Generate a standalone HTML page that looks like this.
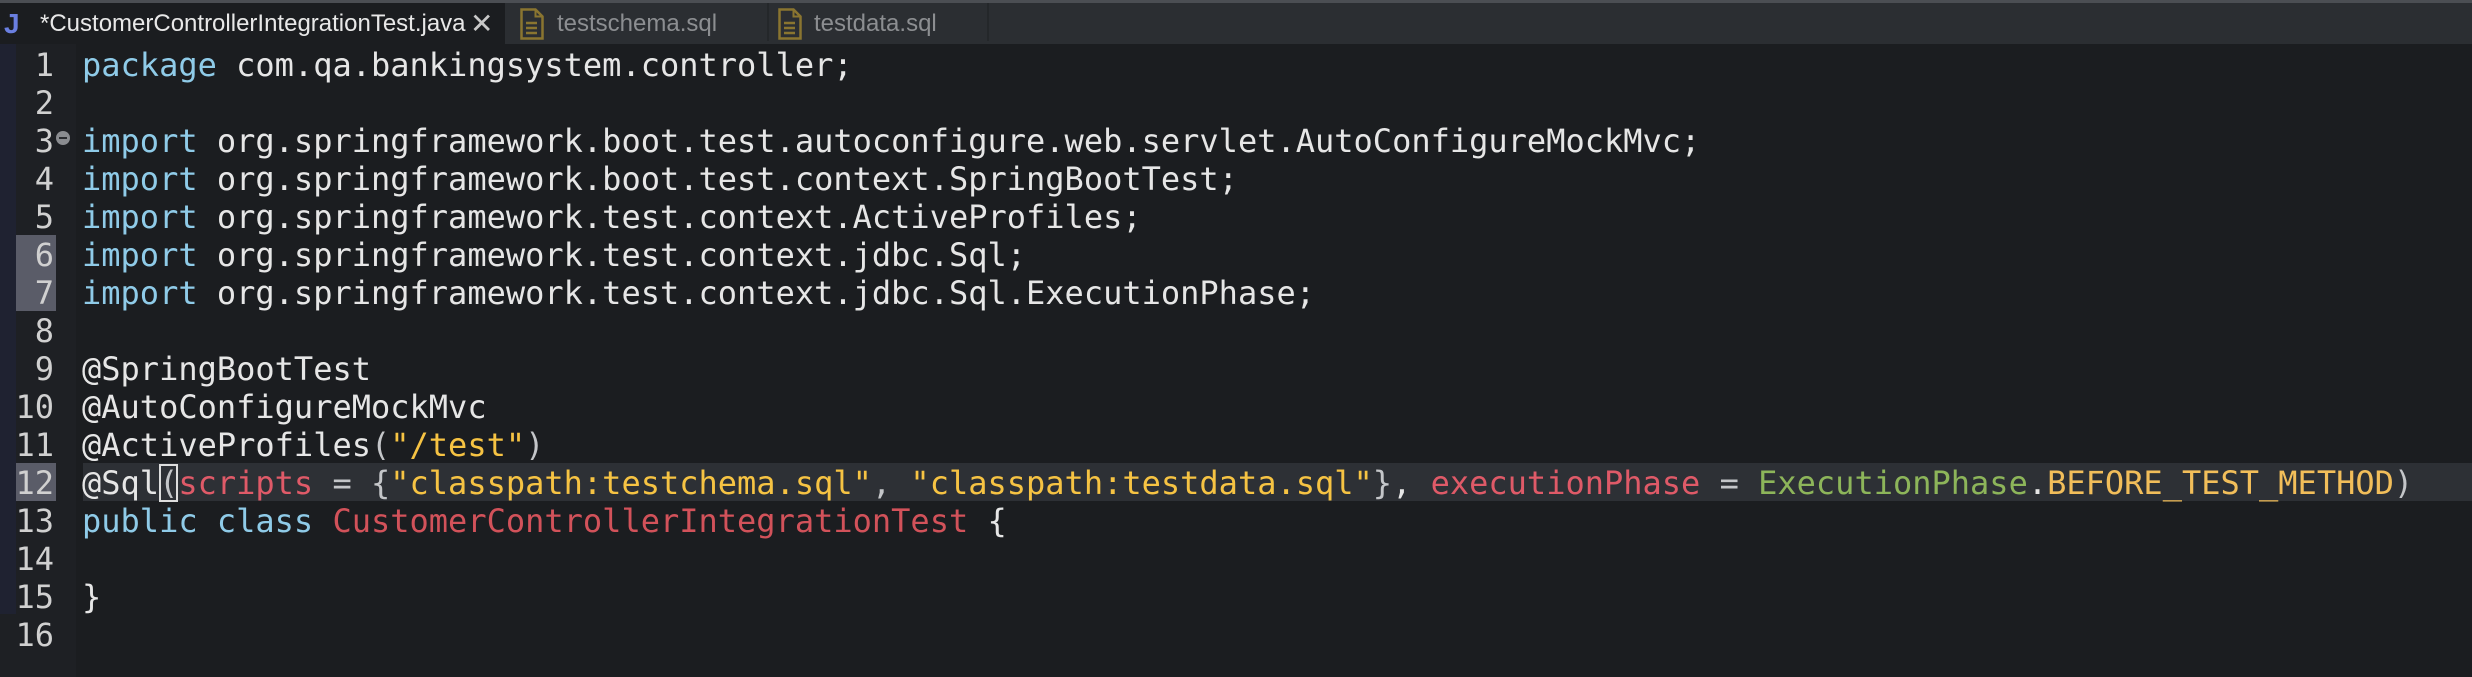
<!DOCTYPE html>
<html><head><meta charset="utf-8"><style>
body{margin:0;width:2472px;height:677px;background:#1b1d20;overflow:hidden;position:relative;font-family:"DejaVu Sans Mono",monospace}
.bar{position:absolute;left:0;top:0;width:2472px;height:44px;background:#2b2e32;border-top:3px solid #4b4e53;box-sizing:border-box}
.tab{position:absolute;top:0;height:41px;font-family:"Liberation Sans",sans-serif;font-size:24px;line-height:41px;color:#8c8e91}
.sep{position:absolute;top:3px;width:2px;height:38px;background:#24272a}
.gut{position:absolute;left:0;top:44px;width:76px;height:633px;background:#1e2024}
.gstrip{position:absolute;left:0;top:44px;width:16px;height:570px;background:#1f2231}
.ln{position:absolute;left:0;width:54px;text-align:right;color:#d0d0d0;font-size:32px;height:38px;line-height:40px}
.code{position:absolute;left:82px;font-size:32px;height:38px;line-height:40px;color:#e6e6e6;white-space:pre}
.k{color:#8fcbe8}.s{color:#f6c343}.r{color:#df5a68}.c{color:#d2525a}.g{color:#8db55a}.o{color:#f2be5a}.p{color:#c4c6c9}
</style></head><body>
<div class="bar"></div>
<div style="position:absolute;left:0;top:3px;width:505px;height:41px;background:#1b1d20"></div>
<div class="tab" style="left:4px;top:3px;color:#6a7fe0;font-weight:bold;font-size:28px">J</div>
<div class="tab" style="left:40px;top:3px;color:#e8e8e8">*CustomerControllerIntegrationTest.java</div>
<div class="tab" style="left:470px;top:3px;color:#c8c8c8;font-size:28px">✕</div>
<div class="sep" style="left:767px"></div><div class="sep" style="left:987px"></div>
<svg style="position:absolute;left:520px;top:8px" width="24" height="32" viewBox="0 0 24 32"><path d="M1.5 1.5h14l7 7v22h-21z" fill="none" stroke="#8a7530" stroke-width="2.5"/><path d="M15.5 1.5v7h7" fill="none" stroke="#8a7530" stroke-width="2"/><path d="M6 15h11M6 20h11M6 25h11" stroke="#8a7530" stroke-width="2.5"/></svg>
<div class="tab" style="left:557px;top:3px">testschema.sql</div>
<svg style="position:absolute;left:778px;top:8px" width="24" height="32" viewBox="0 0 24 32"><path d="M1.5 1.5h14l7 7v22h-21z" fill="none" stroke="#8a7530" stroke-width="2.5"/><path d="M15.5 1.5v7h7" fill="none" stroke="#8a7530" stroke-width="2"/><path d="M6 15h11M6 20h11M6 25h11" stroke="#8a7530" stroke-width="2.5"/></svg>
<div class="tab" style="left:814px;top:3px">testdata.sql</div>
<div class="gut"></div><div class="gstrip"></div>
<div style="position:absolute;left:16px;top:235px;width:40px;height:76px;background:#5a5c68"></div>
<div style="position:absolute;left:16px;top:463px;width:40px;height:38px;background:#5a5c68"></div>
<div style="position:absolute;left:83px;top:463px;width:2389px;height:38px;background:#2d3035"></div>
<div style="position:absolute;left:56px;top:131px;width:14px;height:14px;border-radius:50%;background:#8a8c90"></div>
<div style="position:absolute;left:59px;top:137px;width:8px;height:2px;background:#2a2c30"></div>
<div class="ln" style="top:45px">1</div><div class="ln" style="top:83px">2</div><div class="ln" style="top:121px">3</div><div class="ln" style="top:159px">4</div><div class="ln" style="top:197px">5</div><div class="ln" style="top:235px">6</div><div class="ln" style="top:273px">7</div><div class="ln" style="top:311px">8</div><div class="ln" style="top:349px">9</div><div class="ln" style="top:387px">10</div><div class="ln" style="top:425px">11</div><div class="ln" style="top:463px">12</div><div class="ln" style="top:501px">13</div><div class="ln" style="top:539px">14</div><div class="ln" style="top:577px">15</div><div class="ln" style="top:615px">16</div>
<div class="code" style="top:45px"><span class="k">package</span> com.qa.bankingsystem.controller;</div>
<div class="code" style="top:121px"><span class="k">import</span> org.springframework.boot.test.autoconfigure.web.servlet.AutoConfigureMockMvc;</div>
<div class="code" style="top:159px"><span class="k">import</span> org.springframework.boot.test.context.SpringBootTest;</div>
<div class="code" style="top:197px"><span class="k">import</span> org.springframework.test.context.ActiveProfiles;</div>
<div class="code" style="top:235px"><span class="k">import</span> org.springframework.test.context.jdbc.Sql;</div>
<div class="code" style="top:273px"><span class="k">import</span> org.springframework.test.context.jdbc.Sql.ExecutionPhase;</div>
<div class="code" style="top:349px">@SpringBootTest</div>
<div class="code" style="top:387px">@AutoConfigureMockMvc</div>
<div class="code" style="top:425px">@ActiveProfiles<span class="p">(</span><span class="s">"/test"</span><span class="p">)</span></div>
<div class="code" style="top:463px">@Sql<span style="outline:2px solid #ddd;outline-offset:-2px" class="p">(</span><span class="r">scripts</span> <span class="p">=</span> <span class="p">{</span><span class="s">"classpath:testchema.sql"</span><span class="p">,</span> <span class="s">"classpath:testdata.sql"</span><span class="p">}</span>, <span class="r">executionPhase</span> <span class="p">=</span> <span class="g">ExecutionPhase</span>.<span class="o">BEFORE_TEST_METHOD</span><span class="p">)</span></div>
<div class="code" style="top:501px"><span class="k">public</span> <span class="k">class</span> <span class="c">CustomerControllerIntegrationTest</span> {</div>
<div class="code" style="top:577px">}</div>
</body></html>
